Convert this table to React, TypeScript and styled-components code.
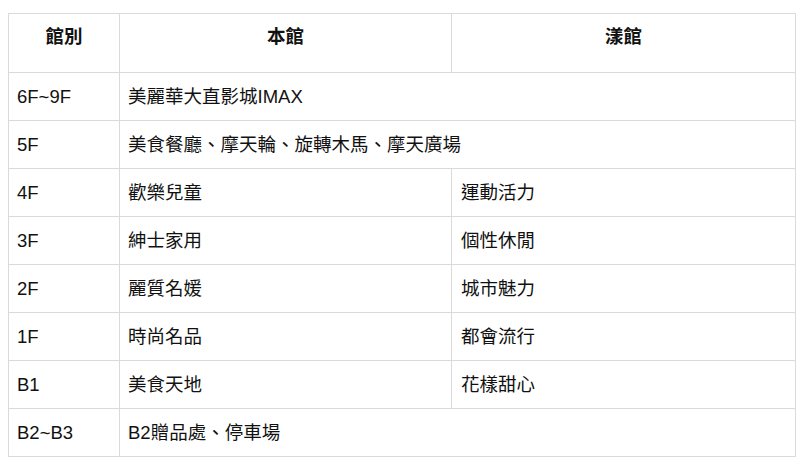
import React from "react";
import styled, { createGlobalStyle } from "styled-components";

const GlobalStyle = createGlobalStyle`
  html, body {
    margin: 0;
    padding: 0;
    background: #ffffff;
  }
  body {
    padding: 13px 8px 8px 8px;
    font-family: "Liberation Sans", "Noto Sans CJK TC", sans-serif;
    color: #111111;
  }
`;

const Table = styled.table`
  width: 787px;
  table-layout: fixed;
  border-collapse: collapse;
  font-size: 18.5px;
  color: #111111;
`;

const HeadCell = styled.th`
  border: 1px solid #dadada;
  height: 46px;
  padding: 12px 8px 0 8px;
  vertical-align: top;
  text-align: center;
  font-weight: bold;
  line-height: 22px;
`;

const Cell = styled.td`
  border: 1px solid #dadada;
  height: 47px;
  padding: 0 8px 0 ${(p: { $pad?: number }) => p.$pad ?? 8}px;
  vertical-align: middle;
  text-align: left;
  line-height: 22px;
  white-space: nowrap;
`;

type Row = { floor: string; main: string; yang?: string };

const rows: Row[] = [
  { floor: "6F~9F", main: "美麗華大直影城IMAX" },
  { floor: "5F", main: "美食餐廳、摩天輪、旋轉木馬、摩天廣場" },
  { floor: "4F", main: "歡樂兒童", yang: "運動活力" },
  { floor: "3F", main: "紳士家用", yang: "個性休閒" },
  { floor: "2F", main: "麗質名媛", yang: "城市魅力" },
  { floor: "1F", main: "時尚名品", yang: "都會流行" },
  { floor: "B1", main: "美食天地", yang: "花樣甜心" },
  { floor: "B2~B3", main: "B2贈品處、停車場" },
];

export default function App() {
  return (
    <>
      <GlobalStyle />
      <Table>
        <colgroup>
          <col style={{ width: 111 }} />
          <col style={{ width: 332 }} />
          <col style={{ width: 344 }} />
        </colgroup>
        <thead>
          <tr>
            <HeadCell>館別</HeadCell>
            <HeadCell>本館</HeadCell>
            <HeadCell>漾館</HeadCell>
          </tr>
        </thead>
        <tbody>
          {rows.map((r) => (
            <tr key={r.floor}>
              <Cell>{r.floor}</Cell>
              {r.yang ? (
                <>
                  <Cell>{r.main}</Cell>
                  <Cell $pad={9}>{r.yang}</Cell>
                </>
              ) : (
                <Cell colSpan={2}>{r.main}</Cell>
              )}
            </tr>
          ))}
        </tbody>
      </Table>
    </>
  );
}
